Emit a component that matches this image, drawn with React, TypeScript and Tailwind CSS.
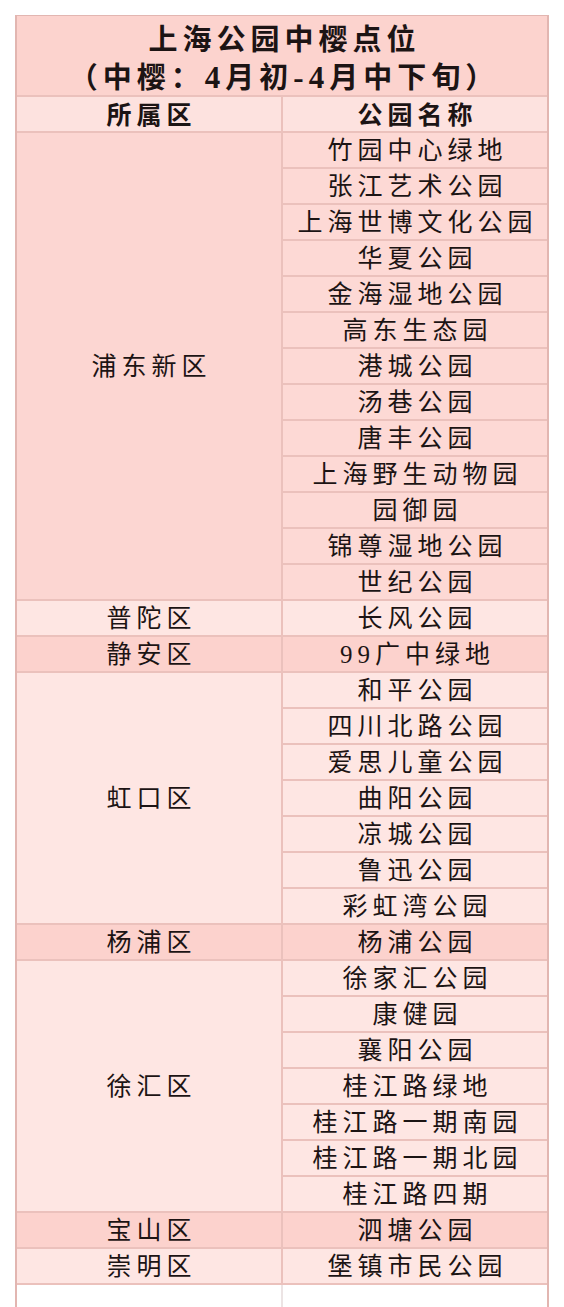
// 上海公园中樱点位表

const FONT = "font-['Liberation_Serif','Noto_Sans_CJK_SC',serif]";

type Group = { district: string; parks: string[]; tone: "dark" | "light" | "pudong" };

const GROUPS: Group[] = [
  {
    district: "浦东新区",
    tone: "pudong",
    parks: [
      "竹园中心绿地",
      "张江艺术公园",
      "上海世博文化公园",
      "华夏公园",
      "金海湿地公园",
      "高东生态园",
      "港城公园",
      "汤巷公园",
      "唐丰公园",
      "上海野生动物园",
      "园御园",
      "锦尊湿地公园",
      "世纪公园",
    ],
  },
  { district: "普陀区", tone: "light", parks: ["长风公园"] },
  { district: "静安区", tone: "dark", parks: ["99广中绿地"] },
  {
    district: "虹口区",
    tone: "light",
    parks: ["和平公园", "四川北路公园", "爱思儿童公园", "曲阳公园", "凉城公园", "鲁迅公园", "彩虹湾公园"],
  },
  { district: "杨浦区", tone: "dark", parks: ["杨浦公园"] },
  {
    district: "徐汇区",
    tone: "light",
    parks: ["徐家汇公园", "康健园", "襄阳公园", "桂江路绿地", "桂江路一期南园", "桂江路一期北园", "桂江路四期"],
  },
  { district: "宝山区", tone: "dark", parks: ["泗塘公园"] },
  { district: "崇明区", tone: "light", parks: ["堡镇市民公园"] },
];

const TONE_BG: Record<Group["tone"], string> = {
  pudong: "bg-[#fcd6d2]",
  dark: "bg-[#fcd2cd]",
  light: "bg-[#fee6e3]",
};

function DistrictGroup({ group }: { group: Group }) {
  const bg = TONE_BG[group.tone];
  return (
    <div className="flex">
      <div
        className={`flex w-[266px] items-center justify-center border-r-2 border-b-2 border-[#ebc1bc] pt-[2px] pl-[5px] text-[25px] leading-[28px] tracking-[5px] ${bg}`}
      >
        {group.district}
      </div>
      <div className="flex flex-1 flex-col">
        {group.parks.map((park) => (
          <div
            key={park}
            className={`flex h-[36px] items-center justify-center border-b-2 border-[#ebc1bc] pt-[2px] pl-[5px] text-[25px] leading-[28px] tracking-[5px] ${
              group.tone === "pudong" ? "bg-[#fdd9d5]" : bg
            }`}
          >
            {park}
          </div>
        ))}
      </div>
    </div>
  );
}

export default function App() {
  return (
    <main className={`h-[1307px] w-[564px] overflow-hidden bg-white pt-[15px] pl-[15px] text-[#1c1414] ${FONT}`}>
      <div className="w-[534px] border-x-2 border-t border-[#e2b6b1]">
        <div className="flex h-[81px] flex-col items-center justify-center border-b-2 border-[#ebc1bc] bg-[#fcd3ce] pt-[8px] text-[29px] font-bold leading-[37px]">
          <div className="pl-[5px] tracking-[5px]">上海公园中樱点位</div>
          <div className="pl-[4px] tracking-[5px]">
            （中樱：<span className="text-[31px]">4</span>月初<span className="text-[31px]">-4</span>月中下旬）
          </div>
        </div>

        <div className="flex h-[36px] bg-[#fde2df] text-[25px] font-bold leading-[28px] tracking-[5px]">
          <div className="flex w-[266px] items-center justify-center border-r-2 border-b-2 border-[#ebc1bc] pt-[4px] pl-[5px]">
            所属区
          </div>
          <div className="flex flex-1 items-center justify-center border-b-2 border-[#ebc1bc] pt-[4px] pl-[5px]">
            公园名称
          </div>
        </div>

        {GROUPS.map((g) => (
          <DistrictGroup key={g.district} group={g} />
        ))}

        <div className="flex h-[40px] bg-white">
          <div className="w-[266px] border-r-2 border-[#ece4e4]" />
          <div className="flex-1" />
        </div>
      </div>
    </main>
  );
}
